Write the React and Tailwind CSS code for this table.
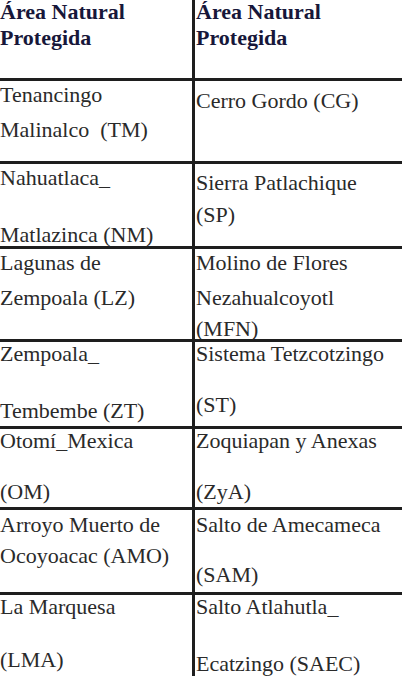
const rows = [
  {
    h: 'h-[81px]',
    header: true,
    left: [['Área Natural', 'mt-0'], ['Protegida', 'mt-[2px]']],
    right: [['Área Natural', 'mt-0'], ['Protegida', 'mt-[2px]']],
  },
  {
    h: 'h-[83px]',
    left: [['Tenancingo', 'mt-[2px]'], ['Malinalco\u00a0 (TM)', 'mt-[11px]']],
    right: [['Cerro Gordo (CG)', 'mt-[8px]']],
  },
  {
    h: 'h-[85px]',
    left: [['Nahuatlaca_', 'mt-[2px]'], ['Matlazinca (NM)', 'mt-[33px]']],
    right: [['Sierra Patlachique', 'mt-[7px]'], ['(SP)', 'mt-[8px]']],
  },
  {
    h: 'h-[93px]',
    left: [['Lagunas de', 'mt-[2px]'], ['Zempoala (LZ)', 'mt-[11px]']],
    right: [['Molino de Flores', 'mt-[2px]'], ['Nezahualcoyotl', 'mt-[11px]'], ['(MFN)', 'mt-[7px]']],
  },
  {
    h: 'h-[87px]',
    left: [['Zempoala_', 'mt-0'], ['Tembembe (ZT)', 'mt-[33px]']],
    right: [['Sistema Tetzcotzingo', 'mt-0'], ['(ST)', 'mt-[27px]']],
  },
  {
    h: 'h-[81px]',
    left: [['Otomí_Mexica', 'mt-0'], ['(OM)', 'mt-[27px]']],
    right: [['Zoquiapan y Anexas', 'mt-0'], ['(ZyA)', 'mt-[27px]']],
  },
  {
    h: 'h-[85px]',
    left: [['Arroyo Muerto de', 'mt-[3px]'], ['Ocoyoacac (AMO)', 'mt-[7px]']],
    right: [['Salto de Amecameca', 'mt-[3px]'], ['(SAM)', 'mt-[26px]']],
  },
  {
    h: 'flex-1',
    last: true,
    left: [['La Marquesa', 'mt-0'], ['(LMA)', 'mt-[29px]']],
    right: [['Salto Atlahutla_', 'mt-0'], ['Ecatzingo (SAEC)', 'mt-[33px]']],
  },
];

function Cell({ lines, header, className }) {
  return (
    <div className={`flex flex-col overflow-hidden ${className}`}>
      {lines.map(([text, mt], i) => (
        <div
          key={i}
          className={`${mt} h-[24px] leading-[24px] whitespace-pre ${
            header ? 'font-bold text-[#17173a]' : 'text-[#2a2a2a]'
          }`}
        >
          {text}
        </div>
      ))}
    </div>
  );
}

export default function App() {
  return (
    <div className="w-[402px] h-[676px] overflow-hidden bg-white flex flex-col font-['Liberation_Serif'] text-[22px]">
      {rows.map((row, i) => (
        <div
          key={i}
          className={`flex shrink-0 ${row.h} ${row.last ? '' : 'border-b-[3px] border-[#1e1e1e]'}`}
        >
          <Cell
            lines={row.left}
            header={row.header}
            className="w-[195px] shrink-0 border-r-[3px] border-[#1e1e1e]"
          />
          <Cell lines={row.right} header={row.header} className="flex-1 pl-[1px]" />
        </div>
      ))}
    </div>
  );
}
